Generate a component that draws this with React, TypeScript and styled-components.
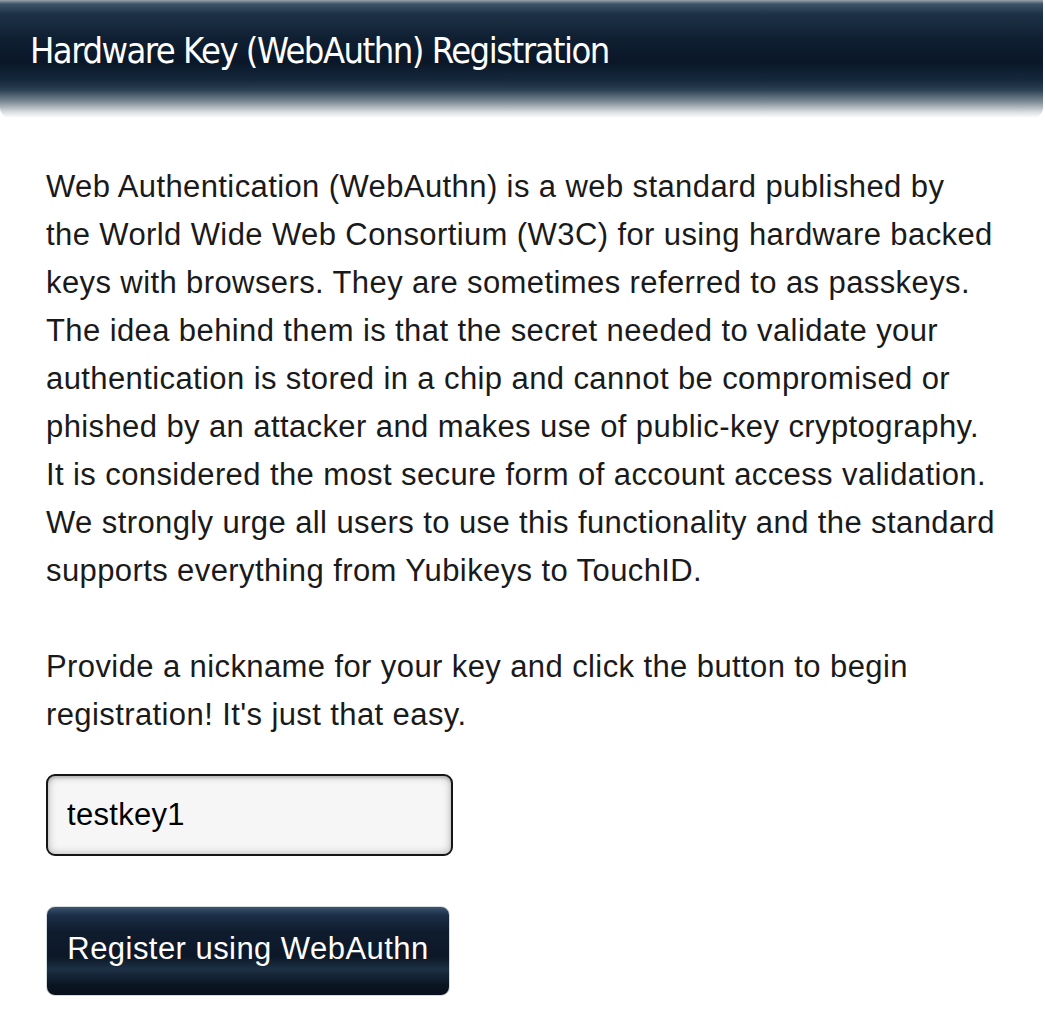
import React from "react";
import styled, { createGlobalStyle } from "styled-components";

const Global = createGlobalStyle`
  html, body { margin: 0; padding: 0; background: #ffffff; }
  body { font-family: "Liberation Sans", Arial, sans-serif; }
`;

const Page = styled.div`
  width: 1045px;
  min-height: 1028px;
  background: #fff;
`;

const Header = styled.header`
  height: 118px;
  box-sizing: border-box;
  margin-right: 2px;
  border-radius: 0 0 10px 10px;
  background: linear-gradient(
    to bottom,
    #9aa3ab 0px,
    #3c5368 4px,
    #1d3247 14px,
    #0f1e31 40px,
    #0a1729 62px,
    #15283c 80px,
    #2a4053 90px,
    #7f8c97 102px,
    #d9dde0 112px,
    #ffffff 118px
  );
  padding: 26px 0 0 30px;
`;

const Title = styled.h1`
  margin: 0;
  font-family: "DejaVu Sans", sans-serif;
  font-stretch: condensed;
  font-weight: normal;
  font-size: 36px;
  letter-spacing: -1.5px;
  line-height: 50px;
  color: #ffffff;
`;

const Content = styled.main`
  padding: 45px 46px 0 46px;
  width: 950px;
`;

const Para = styled.p`
  margin: 0 0 48px 0;
  font-size: 31px;
  letter-spacing: 0.4px;
  line-height: 48px;
  color: #1a1a1a;
`;

const Form = styled.form`
  display: flex;
  flex-direction: column;
  align-items: flex-start;
  gap: 50px;
  padding-top: 35px;
  margin-top: -48px;
`;

const NickInput = styled.input`
  box-sizing: border-box;
  width: 407px;
  height: 82px;
  border: 2px solid #151515;
  border-radius: 9px;
  padding: 0 19px;
  font-family: "Liberation Sans", Arial, sans-serif;
  font-size: 31px;
  letter-spacing: 0.3px;
  color: #000;
  background: #f6f6f6;
  box-shadow: inset 0 0 8px rgba(0, 0, 0, 0.28), inset 0 2px 3px rgba(0,0,0,0.15);
  outline: none;
`;

const RegisterButton = styled.button`
  box-sizing: border-box;
  width: 404px;
  height: 90px;
  border: 1px solid #d6dbe0;
  border-radius: 9px;
  padding: 0 0 4px 0;
  font-family: "Liberation Sans", Arial, sans-serif;
  font-size: 31px;
  letter-spacing: 0.45px;
  color: #ffffff;
  cursor: pointer;
  background: linear-gradient(
    to bottom,
    #3d5470 0px,
    #1b2f48 8px,
    #0f1c2e 25px,
    #0c1828 50px,
    #1d3044 62px,
    #0a1522 78px,
    #070f1a 90px
  );
`;

export default function App() {
  return (
    <Page>
      <Global />
      <Header>
        <Title>Hardware Key (WebAuthn) Registration</Title>
      </Header>
      <Content>
        <Para>
          Web Authentication (WebAuthn) is a web standard published by the World Wide Web
          Consortium (W3C) for using hardware backed keys with browsers. They are sometimes
          referred to as passkeys. The idea behind them is that the secret needed to validate
          your authentication is stored in a chip and cannot be compromised or phished by an
          attacker and makes use of public-key cryptography. It is considered the most secure
          form of account access validation. We strongly urge all users to use this
          functionality and the standard supports everything from Yubikeys to TouchID.
        </Para>
        <Para>
          Provide a nickname for your key and click the button to begin registration! It's
          just that easy.
        </Para>
        <Form onSubmit={(e) => e.preventDefault()}>
          <NickInput type="text" defaultValue="testkey1" />
          <RegisterButton type="submit">Register using WebAuthn</RegisterButton>
        </Form>
      </Content>
    </Page>
  );
}
